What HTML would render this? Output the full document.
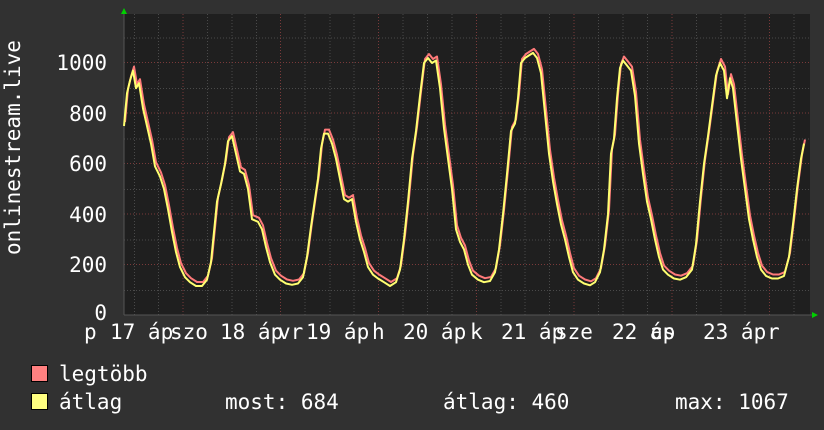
<!DOCTYPE html><html><head><meta charset="utf-8"><style>
body{margin:0;width:824px;height:430px;background:#313131;overflow:hidden;position:relative;font-family:"DejaVu Sans Mono","Liberation Mono",monospace;color:#fff;font-size:21px}
.t{position:absolute;white-space:pre;line-height:20px}
.sq{position:absolute;width:15px;height:15px;border:1px solid #000}
</style></head><body>
<svg width="824" height="430" style="position:absolute;left:0;top:0">
<rect x="124" y="14" width="686" height="301" fill="#1f1f1f"/>
<g stroke="#4a4a4a" stroke-dasharray="1,2" stroke-width="1">
<path d="M124 290.5H810M124 240H810M124 189.5H810M124 139H810M124 88.5H810M124 38H810"/>
<path d="M134.5 14V315M158.5 14V315M207.5 14V315M232 14V315M256.5 14V315M305 14V315M330 14V315M354 14V315M403 14V315M427.5 14V315M452 14V315M501 14V315M525 14V315M549.5 14V315M598.5 14V315M623 14V315M647.5 14V315M696.5 14V315M721 14V315M745 14V315M794 14V315"/>
</g>
<g stroke="#7a3a3a" stroke-dasharray="1,2" stroke-width="1">
<path d="M124 264.5H810M124 214H810M124 163.5H810M124 113H810M124 62.5H810"/>
<path d="M183 14V315M280.5 14V315M378.5 14V315M476.5 14V315M574 14V315M672 14V315M769.5 14V315"/>
</g>
<path d="M124 315H812M124 315V10" stroke="#555" stroke-width="1"/>
<path d="M121 14L124 8L127 14Z" fill="#00d000"/>
<path d="M812 312L818 315L812 318Z" fill="#00d000"/>
<g fill="none" stroke-width="2" stroke-linejoin="round">
<polyline id="p" stroke="#ff7a7a" transform="translate(1,-4)" points=""/>
<polyline id="q" stroke="#ffff70" points=""/>
</g>
</svg>
<script>
var d=[124,750,127,880,130,930,133,970,136,900,139,920,143,820,147,750,151,680,155,590,160,550,164,500,168,420,172,330,176,250,180,190,185,150,190,130,196,115,202,115,207,140,211,210,214,330,217,450,221,520,225,600,228,690,232,710,236,640,240,570,244,560,248,500,252,380,258,370,262,340,266,270,270,210,275,160,280,140,286,125,292,120,298,125,303,150,307,230,311,350,315,460,318,540,321,660,324,720,328,720,332,680,336,620,340,540,344,460,348,450,352,460,356,370,360,300,364,250,368,190,373,160,378,145,384,130,390,115,396,130,400,180,404,300,408,450,412,620,416,730,420,870,424,1000,428,1020,432,1000,436,1010,440,900,444,740,448,620,452,500,456,340,460,290,464,260,468,200,472,160,478,140,484,130,490,135,495,170,499,260,503,400,507,560,511,730,515,760,518,860,521,1000,525,1020,529,1030,533,1040,537,1020,541,960,545,800,549,640,553,530,557,440,561,360,565,300,569,230,573,170,578,140,584,125,590,118,595,130,600,170,604,260,608,400,611,640,614,700,617,860,620,980,623,1010,627,990,631,970,635,870,639,680,643,560,647,450,651,380,655,300,659,230,663,180,668,160,674,145,680,140,686,150,692,180,696,280,700,450,704,600,708,710,712,830,716,950,720,1000,724,970,727,860,730,940,733,900,737,760,741,620,745,500,749,380,753,300,757,230,761,180,766,155,772,145,778,145,784,155,789,230,793,360,797,500,801,620,804,680];
var s=[];for(var i=0;i<d.length;i+=2)s.push(d[i]+","+(315-d[i+1]*0.252).toFixed(1));
document.getElementById('p').setAttribute('points',s.join(' '));
document.getElementById('q').setAttribute('points',s.join(' '));
</script>
<div class="t" style="left:-77px;top:155px;transform:rotate(-90deg);width:180px;text-align:center">onlinestream.live</div>
<div class="t" style="left:52px;top:53px;width:55px;text-align:right">1000</div>
<div class="t" style="left:52px;top:104px;width:55px;text-align:right">800</div>
<div class="t" style="left:52px;top:154px;width:55px;text-align:right">600</div>
<div class="t" style="left:52px;top:205px;width:55px;text-align:right">400</div>
<div class="t" style="left:52px;top:255px;width:55px;text-align:right">200</div>
<div class="t" style="left:52px;top:303px;width:55px;text-align:right">0</div>
<div class="t" style="left:84px;top:322px">p</div>
<div class="t" style="left:110px;top:322px">17 áp</div>
<div class="t" style="left:170px;top:322px">szo</div>
<div class="t" style="left:220px;top:322px">18 áp</div>
<div class="t" style="left:278px;top:322px">vr</div>
<div class="t" style="left:306px;top:322px">19 áp</div>
<div class="t" style="left:372px;top:322px">h</div>
<div class="t" style="left:403px;top:322px">20 áp</div>
<div class="t" style="left:470px;top:322px">k</div>
<div class="t" style="left:501px;top:322px">21 áp</div>
<div class="t" style="left:555px;top:322px">sze</div>
<div class="t" style="left:612px;top:322px">22 áp</div>
<div class="t" style="left:650px;top:322px">cs</div>
<div class="t" style="left:703px;top:322px">23 áp</div>
<div class="t" style="left:767px;top:322px">r</div>
<div class="sq" style="left:31px;top:365px;background:#ff8080"></div>
<div class="sq" style="left:31px;top:393px;background:#ffff80"></div>
<div class="t" style="left:59px;top:364px">legtöbb</div>
<div class="t" style="left:59px;top:392px">átlag</div>
<div class="t" style="left:225px;top:392px">most: 684</div>
<div class="t" style="left:443px;top:392px">átlag: 460</div>
<div class="t" style="left:675px;top:392px">max: 1067</div>
</body></html>
